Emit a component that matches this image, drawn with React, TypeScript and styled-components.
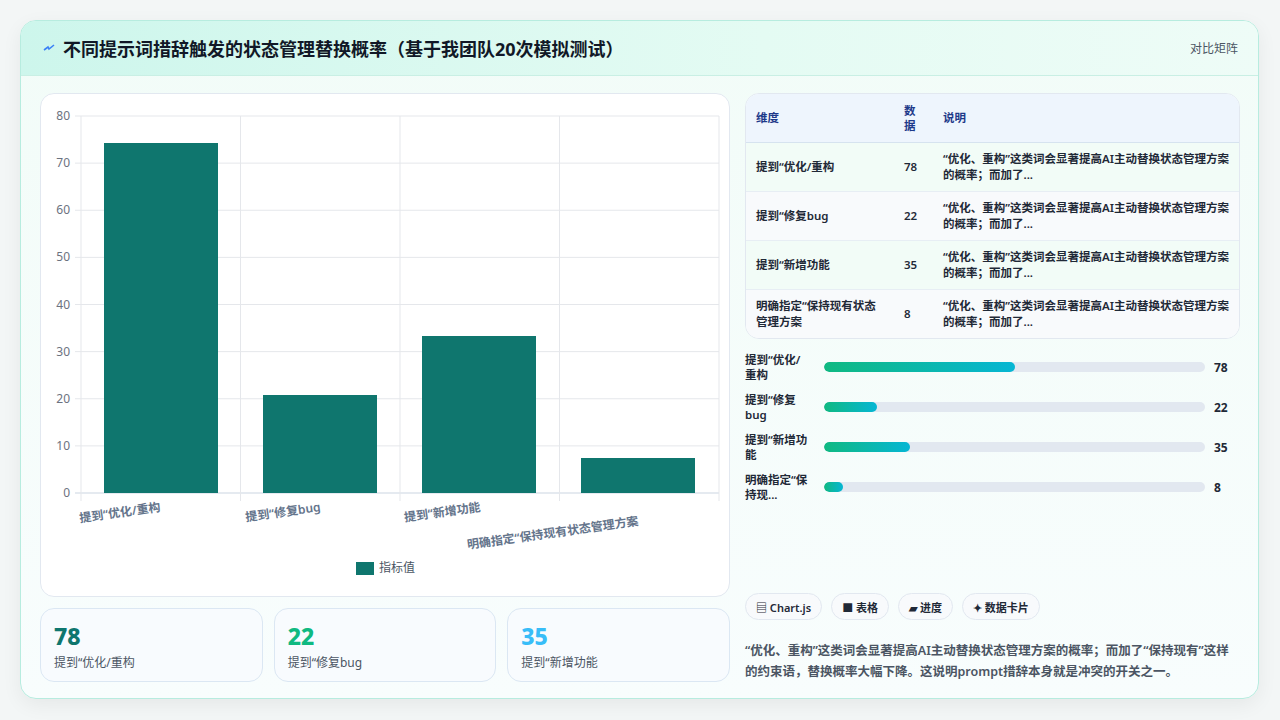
import React from 'react';
import styled, { createGlobalStyle } from 'styled-components';

const font = `"Noto Sans", "Noto Sans CJK SC", sans-serif`;

const GlobalStyle = createGlobalStyle`
  html, body { margin: 0; padding: 0; background: #f3f6f6; font-family: ${font}; }
  * { box-sizing: border-box; }
`;

const rows = [
  { name: '提到“优化/重构', short: '提到“优化/重构', value: 78 },
  { name: '提到“修复bug', short: '提到“修复bug', value: 22 },
  { name: '提到“新增功能', short: '提到“新增功能', value: 35 },
  { name: '明确指定“保持现有状态管理方案', short: '明确指定“保持现...', value: 8 },
];
const note = '“优化、重构”这类词会显著提高AI主动替换状态管理方案的概率；而加了...';

const Page = styled.div`
  width: 1280px;
  height: 720px;
  padding: 20px 21px 21px 20px;
`;

const Card = styled.div`
  height: 679px;
  border: 1px solid #b7ecdf;
  border-radius: 16px;
  background: linear-gradient(180deg, #f2fcf8 0%, #f8fdfd 100%);
  box-shadow: 0 6px 20px rgba(0, 0, 0, 0.06);
  overflow: hidden;
  display: flex;
  flex-direction: column;
`;

const Header = styled.div`
  height: 55px;
  flex: none;
  display: flex;
  align-items: center;
  justify-content: space-between;
  padding: 0 20px 0 22px;
  background: linear-gradient(90deg, #cdf6ec 0%, #e4fbf3 60%, #eefcf7 100%);
  border-bottom: 1px solid #c9efe4;
`;

const Title = styled.h1`
  margin: 0;
  font-size: 18px;
  font-weight: 700;
  color: #111827;
  display: flex;
  align-items: center;
  gap: 8px;
`;

const Mode = styled.span`
  font-size: 12px;
  color: #4b5563;
`;

const Body = styled.div`
  flex: 1;
  display: grid;
  grid-template-columns: 690px 495px;
  gap: 15px;
  padding: 17px 18px 18px 19px;
`;

const Column = styled.div`
  display: flex;
  flex-direction: column;
  gap: 11px;
`;

const Panel = styled.div`
  background: #fff;
  border: 1px solid #e2e8f0;
  border-radius: 14px;
  overflow: hidden;
`;

const ChartPanel = styled(Panel)`
  height: 504px;
`;

const Stats = styled.div`
  display: grid;
  grid-template-columns: repeat(3, 1fr);
  gap: 11px;
`;

const Stat = styled.div`
  height: 74px;
  border: 1px solid #dbe7f3;
  border-radius: 14px;
  background: #f8fbfe;
  padding: 12px 13px;
`;

const StatValue = styled.div<{ $c: string }>`
  font-size: 23px;
  font-weight: 800;
  color: ${(p) => p.$c};
  line-height: 30px;
`;

const StatLabel = styled.div`
  font-size: 12px;
  color: #4b5563;
  margin-top: 2px;
`;

const Table = styled.table`
  width: 100%;
  border-collapse: collapse;
  font-size: 11.5px;
  color: #1f2937;
  th {
    background: #eef5fd;
    color: #1e3a8a;
    text-align: left;
    font-weight: 700;
    height: 48px;
    padding: 0 10px;
    line-height: 15px;
    border-bottom: 1px solid #d6e3ef;
  }
  td {
    height: 49px;
    padding: 0 10px;
    line-height: 16px;
    font-weight: 600;
    border-bottom: 1px solid #e7eef4;
  }
  tr:last-child td { border-bottom: none; }
  tbody tr:nth-child(odd) td { background: #f2fcf7; }
  tbody tr:nth-child(even) td { background: #f8fafc; }
`;

const Bars = styled.div`
  display: flex;
  flex-direction: column;
  gap: 10px;
  margin-top: 2px;
`;

const BarRow = styled.div`
  display: grid;
  grid-template-columns: 79px 1fr 35px;
  align-items: center;
  height: 30px;
`;

const BarLabel = styled.div`
  font-size: 11.5px;
  font-weight: 600;
  color: #1f2937;
  line-height: 15px;
  width: 64px;
`;

const Track = styled.div`
  height: 10px;
  border-radius: 5px;
  background: #e2e8f0;
  overflow: hidden;
`;

const Fill = styled.div`
  height: 100%;
  border-radius: 5px;
  background: linear-gradient(90deg, #10b981, #06b6d4);
`;

const BarValue = styled.div`
  font-size: 12px;
  font-weight: 700;
  color: #1f2937;
  padding-left: 9px;
`;

const Spacer = styled.div`
  flex: 1;
`;

const Pills = styled.div`
  display: flex;
  gap: 9px;
`;

const Pill = styled.span`
  height: 27px;
  padding: 0 10px;
  border: 1px solid #e2e8f0;
  border-radius: 14px;
  background: #f8fafc;
  font-size: 11px;
  font-weight: 600;
  color: #1f2937;
  display: flex;
  align-items: center;
  gap: 3px;
`;

const Note = styled.p`
  margin: 9px 0 0;
  font-size: 12.5px;
  line-height: 21px;
  font-weight: 600;
  color: #4b5563;
`;

const ox = 40;
const oy = 93;
const barTops = [142, 394, 335, 457];

const Chart = () => (
  <svg width="690" height="504" viewBox={`${ox} ${oy} 690 504`}>
    {[0, 10, 20, 30, 40, 50, 60, 70, 80].map((v) => {
      const y = 492 - v * 4.7125;
      return (
        <g key={v}>
          <line x1="74" x2="718" y1={y} y2={y} stroke={v === 0 ? '#cbd5e1' : '#e5e7eb'} />
          <text x="69" y={y + 4} fontSize="12" fill="#6b7280" textAnchor="end" fontFamily={font}>{v}</text>
        </g>
      );
    })}
    {[80, 239.5, 399, 558.5, 718].map((x) => (
      <line key={x} x1={x} x2={x} y1="115" y2="500" stroke="#e5e7eb" />
    ))}
    {barTops.map((t, i) => (
      <rect key={i} x={103 + i * 159} y={t} width="114" height={492 - t} fill="#0f766e" />
    ))}
    {rows.map((r, i) => {
      const x = [160, 320, 480, 638][i];
      const y = i === 3 ? 524 : 510;
      return (
        <text key={i} x={x} y={y} fontSize="12" fontWeight="600" fill="#64748b" textAnchor="end" fontFamily={font}
          transform={`rotate(-8 ${x} ${y})`}>{r.name}</text>
      );
    })}
    <rect x="355" y="561" width="18" height="13" fill="#0f766e" />
    <text x="378" y="571" fontSize="12" fill="#4b5563" fontFamily={font}>指标值</text>
  </svg>
);

export default function App() {
  return (
    <Page>
      <GlobalStyle />
      <Card>
        <Header>
          <Title>
            <svg width="12" height="12" viewBox="0 0 12 12">
              <path d="M1 8 L5 5 L6 7 L11 3" stroke="#3b82f6" strokeWidth="1.6" fill="none" />
            </svg>
            不同提示词措辞触发的状态管理替换概率（基于我团队20次模拟测试）
          </Title>
          <Mode>对比矩阵</Mode>
        </Header>
        <Body>
          <Column>
            <ChartPanel><Chart /></ChartPanel>
            <Stats>
              <Stat><StatValue $c="#0f766e">78</StatValue><StatLabel>提到“优化/重构</StatLabel></Stat>
              <Stat><StatValue $c="#10b981">22</StatValue><StatLabel>提到“修复bug</StatLabel></Stat>
              <Stat><StatValue $c="#38bdf8">35</StatValue><StatLabel>提到“新增功能</StatLabel></Stat>
            </Stats>
          </Column>
          <Column>
            <Panel>
              <Table>
                <colgroup><col style={{ width: 148 }} /><col style={{ width: 39 }} /><col /></colgroup>
                <thead><tr><th>维度</th><th>数<br />据</th><th>说明</th></tr></thead>
                <tbody>
                  {rows.map((r) => (
                    <tr key={r.name}><td>{r.name}</td><td>{r.value}</td><td>{note}</td></tr>
                  ))}
                </tbody>
              </Table>
            </Panel>
            <Bars>
              {[
                ['提到“优化/', '重构'], ['提到“修复', 'bug'], ['提到“新增功', '能'], ['明确指定“保', '持现...'],
              ].map((l, i) => (
                <BarRow key={i}>
                  <BarLabel>{l[0]}<br />{l[1]}</BarLabel>
                  <Track><Fill style={{ width: `${[50, 14, 22.5, 5][i]}%` }} /></Track>
                  <BarValue>{rows[i].value}</BarValue>
                </BarRow>
              ))}
            </Bars>
            <Spacer />
            <Pills>
              <Pill>▤ Chart.js</Pill>
              <Pill>■ 表格</Pill>
              <Pill>▰ 进度</Pill>
              <Pill>✦ 数据卡片</Pill>
            </Pills>
            <Note>“优化、重构”这类词会显著提高AI主动替换状态管理方案的概率；而加了“保持现有”这样的约束语，替换概率大幅下降。这说明prompt措辞本身就是冲突的开关之一。</Note>
          </Column>
        </Body>
      </Card>
    </Page>
  );
}
